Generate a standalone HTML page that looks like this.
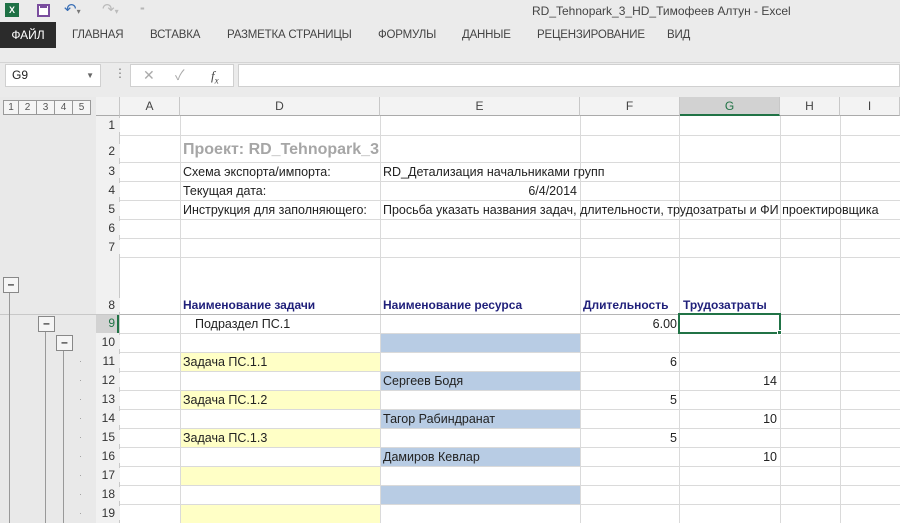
<!DOCTYPE html>
<html><head><meta charset="utf-8"><style>
*{margin:0;padding:0;box-sizing:border-box}
body{width:900px;height:523px;overflow:hidden;background:#fff;font-family:"Liberation Sans","Noto Sans CJK SC",sans-serif;position:relative;font-size:12px;color:#222}
.a{position:absolute}
.tab{position:absolute;top:22px;height:26px;line-height:26px;font-size:11.5px;color:#444;letter-spacing:-0.2px}
.rh{position:absolute;left:96px;width:24px;text-align:right;padding-right:5px;font-size:12px;color:#333;background:#f1f1f1}
.c{position:absolute;font-size:12.5px;line-height:21px;white-space:nowrap;padding:0 3px}
.hl{position:absolute;left:120px;width:780px;height:1px;background:#dadada}
.vl{position:absolute;top:116px;bottom:0;width:1px;background:#dadada}
.ch{position:absolute;top:97px;height:19px;line-height:19px;text-align:center;font-size:12px;color:#444;border-right:1px solid #c8c8c8;border-bottom:1px solid #aaa;background:#f3f3f3}
.b{color:#1f1f7a;font-weight:bold}
.y{background:#ffffc6}
.bl{background:#b8cce4}
</style></head><body>
<div class="a" style="left:0;top:0;width:900px;height:97px;background:#ebebeb"></div>
<div class="a" style="left:5px;top:3px;width:14px;height:14px;background:#1e7145;color:#fff;font-size:9px;font-weight:bold;line-height:14px;text-align:center">X</div>
<div class="a" style="left:37px;top:4px;width:13px;height:13px;border:2px solid #7a4d9e;background:#fff"></div>
<div class="a" style="left:40px;top:4px;width:7px;height:4px;background:#7a4d9e"></div>
<div class="a" style="left:64px;top:0;font-size:15px;color:#3a6fb5">↶<span style="font-size:8px;color:#777">▾</span></div>
<div class="a" style="left:102px;top:0;font-size:15px;color:#bbb">↷<span style="font-size:8px">▾</span></div>
<div class="a" style="left:140px;top:2px;font-size:9px;color:#888">₌</div>
<div class="a" style="left:532px;top:4px;font-size:12px;color:#444">RD_Tehnopark_3_HD_Тимофеев Алтун - Excel</div>
<div class="a" style="left:0;top:22px;width:56px;height:26px;background:#2b2b2b;color:#fff;line-height:26px;text-align:center;font-size:12px">ФАЙЛ</div>
<div class="tab" style="left:72px">ГЛАВНАЯ</div>
<div class="tab" style="left:150px">ВСТАВКА</div>
<div class="tab" style="left:227px">РАЗМЕТКА СТРАНИЦЫ</div>
<div class="tab" style="left:378px">ФОРМУЛЫ</div>
<div class="tab" style="left:462px">ДАННЫЕ</div>
<div class="tab" style="left:537px">РЕЦЕНЗИРОВАНИЕ</div>
<div class="tab" style="left:667px">ВИД</div>
<div class="a" style="left:0;top:62px;width:900px;height:1px;background:#d4d4d4"></div>
<div class="a" style="left:5px;top:64px;width:96px;height:23px;background:#fff;border:1px solid #d0d0d0;padding-left:6px;line-height:21px;font-size:12px">G9<span style="position:absolute;right:6px;font-size:8px;color:#666">▼</span></div>
<div class="a" style="left:114px;top:66px;color:#777;font-size:12px">⋮</div>
<div class="a" style="left:130px;top:64px;width:104px;height:23px;background:#fff;border:1px solid #d0d0d0;color:#aaa;line-height:21px;font-size:14px"><span style="position:absolute;left:12px">✕</span><span style="position:absolute;left:44px">✓</span><span style="position:absolute;left:80px;color:#444;font-style:italic;font-family:'Liberation Serif',serif;font-size:13px">f<sub style="font-size:9px">x</sub></span></div>
<div class="a" style="left:238px;top:64px;width:662px;height:23px;background:#fff;border:1px solid #d0d0d0"></div>
<div class="a" style="left:0;top:97px;width:96px;height:426px;background:#e9e9e9"></div>
<div class="a" style="left:96px;top:97px;width:24px;height:426px;background:#f1f1f1;border-right:1px solid #c8c8c8"></div>
<div class="a" style="left:3px;top:100px;display:flex">
<div style="width:16px;height:15px;border:1px solid #999;font-size:10px;text-align:center;line-height:13px;color:#555;background:#f5f5f5">1</div>
<div style="width:18px;height:15px;border:1px solid #999;border-left:0;font-size:10px;text-align:center;line-height:13px;color:#555;background:#f5f5f5">2</div>
<div style="width:18px;height:15px;border:1px solid #999;border-left:0;font-size:10px;text-align:center;line-height:13px;color:#555;background:#f5f5f5">3</div>
<div style="width:18px;height:15px;border:1px solid #999;border-left:0;font-size:10px;text-align:center;line-height:13px;color:#555;background:#f5f5f5">4</div>
<div style="width:18px;height:15px;border:1px solid #999;border-left:0;font-size:10px;text-align:center;line-height:13px;color:#555;background:#f5f5f5">5</div>
</div>
<div class="a" style="left:0;top:314px;width:120px;height:1px;background:#c8c8c8"></div>
<div class="a" style="left:3px;top:277px;width:16px;height:16px;border:1px solid #888;background:#f5f5f5;text-align:center;line-height:13px;font-weight:bold;color:#333">–</div>
<div class="a" style="left:9px;top:293px;width:1px;height:230px;background:#999"></div>
<div class="a" style="left:38px;top:316px;width:17px;height:16px;border:1px solid #888;background:#f5f5f5;text-align:center;line-height:13px;font-weight:bold;color:#333">–</div>
<div class="a" style="left:45px;top:332px;width:1px;height:191px;background:#999"></div>
<div class="a" style="left:56px;top:335px;width:17px;height:16px;border:1px solid #888;background:#f5f5f5;text-align:center;line-height:13px;font-weight:bold;color:#333">–</div>
<div class="a" style="left:63px;top:351px;width:1px;height:172px;background:#999"></div>
<div class="ch" style="left:96px;width:24px;background:#f1f1f1"></div>
<div class="ch" style="left:120px;width:60px">A</div>
<div class="ch" style="left:180px;width:200px">D</div>
<div class="ch" style="left:380px;width:200px">E</div>
<div class="ch" style="left:580px;width:100px">F</div>
<div class="ch" style="left:680px;width:100px;background:#d2d2d2;color:#217346;border-bottom:2px solid #217346">G</div>
<div class="ch" style="left:780px;width:60px">H</div>
<div class="ch" style="left:840px;width:60px">I</div>
<div class="a y" style="left:180px;top:352px;width:200px;height:19px"></div>
<div class="a y" style="left:180px;top:390px;width:200px;height:19px"></div>
<div class="a y" style="left:180px;top:428px;width:200px;height:19px"></div>
<div class="a y" style="left:180px;top:466px;width:200px;height:19px"></div>
<div class="a y" style="left:180px;top:504px;width:200px;height:19px"></div>
<div class="a bl" style="left:380px;top:333px;width:200px;height:19px"></div>
<div class="a bl" style="left:380px;top:371px;width:200px;height:19px"></div>
<div class="a bl" style="left:380px;top:409px;width:200px;height:19px"></div>
<div class="a bl" style="left:380px;top:447px;width:200px;height:19px"></div>
<div class="a bl" style="left:380px;top:485px;width:200px;height:19px"></div>
<div class="vl" style="left:180px"></div><div class="vl" style="left:380px"></div><div class="vl" style="left:580px"></div><div class="vl" style="left:679px"></div><div class="vl" style="left:780px"></div><div class="vl" style="left:840px"></div>
<div class="hl" style="top:135px"></div><div class="hl" style="top:162px"></div><div class="hl" style="top:181px"></div><div class="hl" style="top:200px"></div><div class="hl" style="top:219px"></div><div class="hl" style="top:238px"></div><div class="hl" style="top:257px"></div><div class="hl" style="top:314px;background:#b5b5b5"></div><div class="hl" style="top:333px"></div><div class="hl" style="top:352px"></div><div class="hl" style="top:371px"></div><div class="hl" style="top:390px"></div><div class="hl" style="top:409px"></div><div class="hl" style="top:428px"></div><div class="hl" style="top:447px"></div><div class="hl" style="top:466px"></div><div class="hl" style="top:485px"></div><div class="hl" style="top:504px"></div>
<div class="rh" style="top:118px">1</div><div class="rh" style="top:144px">2</div><div class="rh" style="top:164px">3</div><div class="rh" style="top:183px">4</div><div class="rh" style="top:202px">5</div><div class="rh" style="top:221px">6</div><div class="rh" style="top:240px">7</div><div class="rh" style="top:298px">8</div>
<div class="a" style="left:96px;top:315px;width:23px;height:18px;background:#d2d2d2;border-right:2px solid #217346"></div>
<div class="rh" style="top:316px;background:none;color:#217346">9</div>
<div class="rh" style="top:335px">10</div><div class="rh" style="top:354px">11</div><div class="rh" style="top:373px">12</div><div class="rh" style="top:392px">13</div><div class="rh" style="top:411px">14</div><div class="rh" style="top:430px">15</div><div class="rh" style="top:449px">16</div><div class="rh" style="top:468px">17</div><div class="rh" style="top:487px">18</div><div class="rh" style="top:506px">19</div>
<div class="a" style="left:79px;top:352px;color:#999;font-size:9px;line-height:19px">·<br>·<br>·<br>·<br>·<br>·<br>·<br>·<br>·</div>
<div class="c" style="left:180px;top:140px;font-size:16px;line-height:20px;font-weight:bold;color:#a6a6a6">Проект: RD_Tehnopark_3</div>
<div class="c" style="left:180px;top:162px">Схема экспорта/импорта:</div>
<div class="c" style="left:380px;top:162px">RD_Детализация начальниками групп</div>
<div class="c" style="left:180px;top:181px">Текущая дата:</div>
<div class="c" style="left:380px;top:181px;width:200px;text-align:right">6/4/2014</div>
<div class="c" style="left:180px;top:200px">Инструкция для заполняющего:</div>
<div class="c" style="left:380px;top:200px">Просьба указать названия задач, длительности, трудозатраты и ФИ проектировщика</div>
<div class="c b" style="left:180px;top:295px;font-size:12px">Наименование задачи</div>
<div class="c b" style="left:380px;top:295px;font-size:12px">Наименование ресурса</div>
<div class="c b" style="left:580px;top:295px;font-size:12px">Длительность</div>
<div class="c b" style="left:680px;top:295px;font-size:12px">Трудозатраты</div>
<div class="c" style="left:192px;top:314px">Подраздел ПС.1</div>
<div class="c" style="left:580px;top:314px;width:100px;text-align:right">6.00</div>
<div class="c" style="left:180px;top:352px">Задача ПС.1.1</div>
<div class="c" style="left:580px;top:352px;width:100px;text-align:right">6</div>
<div class="c" style="left:380px;top:371px">Сергеев Бодя</div>
<div class="c" style="left:680px;top:371px;width:100px;text-align:right">14</div>
<div class="c" style="left:180px;top:390px">Задача ПС.1.2</div>
<div class="c" style="left:580px;top:390px;width:100px;text-align:right">5</div>
<div class="c" style="left:380px;top:409px">Тагор Рабиндранат</div>
<div class="c" style="left:680px;top:409px;width:100px;text-align:right">10</div>
<div class="c" style="left:180px;top:428px">Задача ПС.1.3</div>
<div class="c" style="left:580px;top:428px;width:100px;text-align:right">5</div>
<div class="c" style="left:380px;top:447px">Дамиров Кевлар</div>
<div class="c" style="left:680px;top:447px;width:100px;text-align:right">10</div>
<div class="a" style="left:678px;top:313px;width:103px;height:21px;border:2px solid #217346"></div>
<div class="a" style="left:777px;top:330px;width:5px;height:5px;background:#217346;border:1px solid #fff"></div>
</body></html>
